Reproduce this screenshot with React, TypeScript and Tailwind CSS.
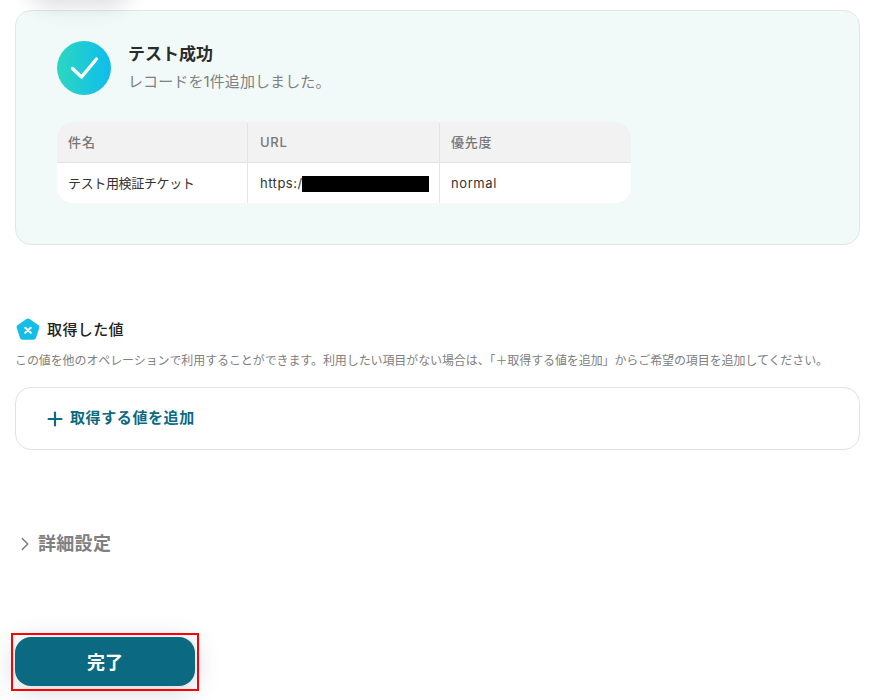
import React from 'react';
import { ChevronRight, Plus } from 'lucide-react';

const font = "font-['Inter','Noto_Sans_CJK_JP',sans-serif]";

const TestResultTable = () => (
  <div className="w-[574px] overflow-hidden rounded-[16px] bg-white text-[13px] tracking-[0.5px]">
    <div className="grid h-[41px] grid-cols-[191px_192px_191px] items-stretch border-b border-[#e4e4e4] bg-[#f2f2f2] pt-[1px] font-medium text-[#777777]">
      <div className="flex items-center border-r border-[#e4e4e4] pl-[11px] tracking-[1px]">件名</div>
      <div className="flex items-center border-r border-[#e4e4e4] pl-[12px] tracking-[0.7px]">URL</div>
      <div className="flex items-center pl-[11px] tracking-[0.8px]">優先度</div>
    </div>
    <div className="grid h-[40px] grid-cols-[191px_192px_191px] items-stretch text-[#333333]">
      <div className="flex items-center border-r border-[#e4e4e4] pt-[1px] pl-[11px] tracking-[-0.35px]">テスト用検証チケット</div>
      <div className="flex items-center border-r border-[#e4e4e4] pt-[1px] pl-[12px]">
        <span>https:/</span>
        <span className="h-[16px] w-[127px] -translate-x-[1px] bg-black" />
      </div>
      <div className="flex items-center pt-[1px] pl-[11px] tracking-[0.6px]">normal</div>
    </div>
  </div>
);

export default function App() {
  return (
    <div className={`${font} relative h-[700px] w-[884px] overflow-hidden bg-white`}>
      <div className="absolute top-[-40px] left-[30px] h-[40px] w-[100px] rounded-full shadow-[0_6px_22px_rgba(0,0,0,0.14)]" />

      <div className="flex flex-col pt-[10px] pl-[15px]">
        {/* Test result */}
        <div className="h-[235px] w-[845px] rounded-[16px] border border-[#e2e6e6] bg-[#f2faf9] pt-[30px] pl-[41px]">
          <div className="flex gap-[17px]">
            <div className="flex h-[54px] w-[54px] items-center justify-center rounded-full bg-gradient-to-r from-[#2dd6c0] to-[#0fbcec]">
              <svg width="30" height="30" viewBox="0 0 30 30" fill="none" stroke="white" strokeWidth="3.4" strokeLinecap="round" strokeLinejoin="round">
                <path d="M3.5 15.5 L12.5 24 L27.5 6" />
              </svg>
            </div>
            <div className="flex flex-col">
              <div className="mt-[1px] text-[17px] leading-[24px] font-semibold text-[#2b2b2b]">テスト成功</div>
              <div className="mt-[5px] text-[15px] leading-[22px] tracking-[0.1px] text-[#808080]">レコードを1件追加しました。</div>
            </div>
          </div>
          <div className="mt-[27px]">
            <TestResultTable />
          </div>
        </div>

        {/* Fetched values */}
        <div className="mt-[73px] flex items-center gap-[7px] pl-[1px]">
          <svg width="24" height="24" viewBox="0 0 24 24">
            <path d="M10.4 1 a2.6 2.6 0 0 1 3.2 0 l8.6 6 a2.6 2.6 0 0 1 1 3 l-3.2 10 a2.6 2.6 0 0 1 -2.5 1.8 h-11 a2.6 2.6 0 0 1 -2.5 -1.8 l-3.2 -10 a2.6 2.6 0 0 1 1 -3 z" fill="#12bde8" />
            <path d="M9.2 9.8 L14.8 14.8 M14.8 9.8 L9.2 14.8" stroke="white" strokeWidth="2" strokeLinecap="round" />
          </svg>
          <div className="text-[15px] leading-[24px] font-medium tracking-[0.4px] text-[#222222]">取得した値</div>
        </div>
        <div className="mt-[10px] text-[12px] leading-[18px] tracking-[-0.1px] text-[#808080]">
          この値を他のオペレーションで利用することができます。利用したい項目がない場合は、「＋取得する値を追加」からご希望の項目を追加してください。
        </div>
        <div className="mt-[17px] flex h-[63px] w-[845px] items-center gap-[4px] rounded-[16px] border border-[#e2e2e2] pl-[28px]">
          <Plus size={22} strokeWidth={2.4} className="text-[#0b6a82]" />
          <span className="text-[15px] font-semibold tracking-[0.6px] text-[#0b6a82]">取得する値を追加</span>
        </div>

        {/* Advanced settings */}
        <div className="mt-[80px] flex items-center gap-[2px]">
          <ChevronRight size={22} strokeWidth={1.5} className="-ml-[1px] text-[#777777]" />
          <span className="text-[18px] leading-[28px] font-semibold tracking-[0.3px] text-[#808080]">詳細設定</span>
        </div>

        <div className="relative mt-[79px] h-[49px] w-[180px]">
          <button className="flex h-full w-full items-center justify-center rounded-[16px] bg-[#0b6a82] pt-[1px] text-[18px] font-bold text-white shadow-[0_4px_24px_rgba(60,80,100,0.25)]">
            完了
          </button>
          <div className="pointer-events-none absolute top-[-4px] right-[-4px] bottom-[-5px] left-[-4px] border-2 border-[#ff0000]" />
        </div>
      </div>
    </div>
  );
}
